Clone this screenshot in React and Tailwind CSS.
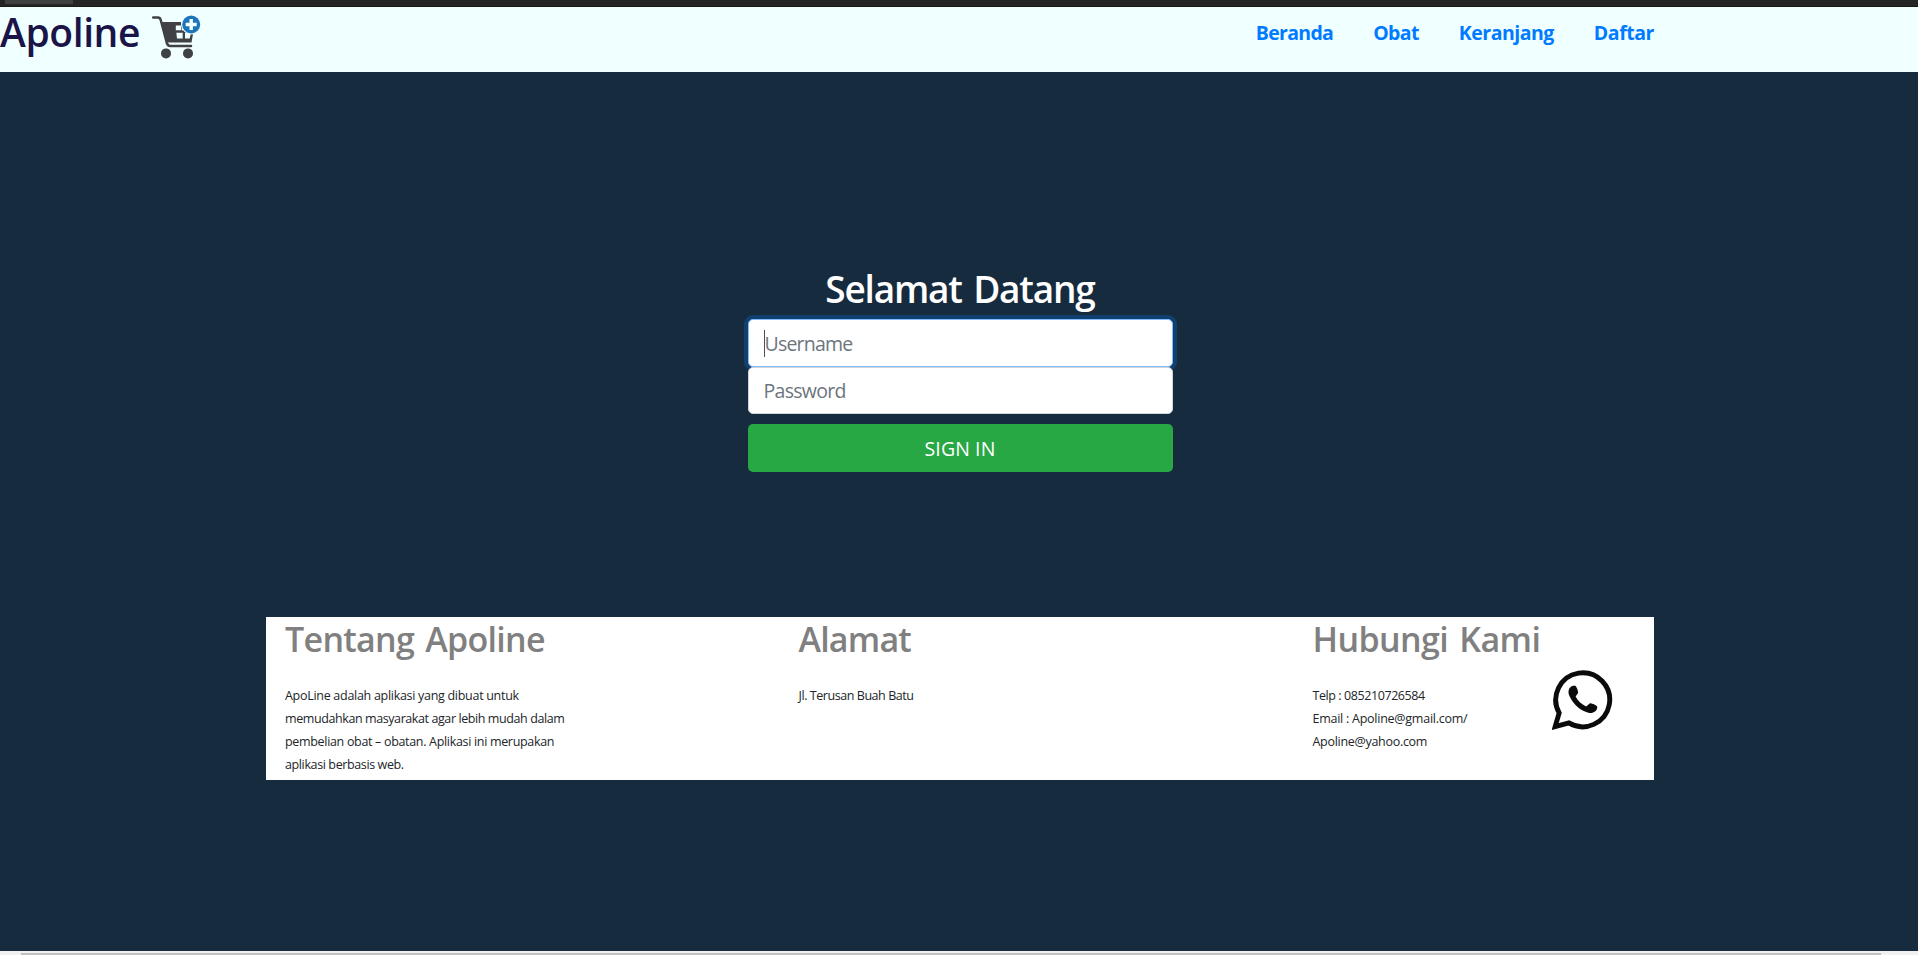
const family = "font-['Open_Sans','Noto_Sans',sans-serif]";

function CartIcon() {
  return (
    <svg viewBox="0 0 52 48" fill="none" className="h-12 w-[52px] shrink-0">
      <path d="M3.200 4.600H8Q10 4.600 10.700 7L16.200 27.500Q17 33 20.500 33H41" stroke="#404144" strokeWidth="2.500" strokeLinecap="round" strokeLinejoin="round" />
      <path d="M11.500 9H31V11.500Q31 13 32 14.500V17.500H35L43.200 20L41.500 29.500H17Z" fill="#404144" />
      <path d="M25.800 12.600H31L31.500 17.300H25.800ZM26.300 19.800H32.700V25.500H27ZM35 19.800H41L39.700 25.500H35Z" fill="#f0ffff" />
      <circle cx="16" cy="40.400" r="5" fill="#404144" />
      <circle cx="38" cy="40.400" r="5" fill="#404144" />
      <circle cx="41.200" cy="11.500" r="9.900" fill="#f0ffff" />
      <circle cx="41.200" cy="11.500" r="9" fill="#1c75bc" />
      <path d="M41.200 6V17M35.700 11.500H46.700" stroke="#f4ffff" strokeWidth="3.400" />
    </svg>
  );
}

function WhatsappIcon() {
  return (
    <svg viewBox="0 0 62 62" fill="none" className="size-[61px] shrink-0">
      <path d="M3.200 57.600L7.300 43.600A27.400 27.400 0 1 1 17.200 53.800Z" stroke="#0b0b0b" strokeWidth="5" strokeLinejoin="miter" />
      <path d="M21.500 16C17 17 15.500 22 18 27C22 35.500 29 41.500 37 43.500C42 44.500 46 41.500 46 37.500C46 36.300 39.500 33.400 38.300 34L34.700 37C30 35 26 31 24 27L26.500 23.500C27 22 24.800 16.500 23.800 16Z" fill="#0b0b0b" />
    </svg>
  );
}

export default function App() {
  return (
    <div className={`flex h-[955px] w-full flex-col overflow-hidden bg-[#172b3f] ${family}`}>
      <div className="h-[7px] shrink-0 border-b border-[#181818] bg-[#252525] pl-[5px]">
        <div className="h-1 w-[68px] bg-[#404040]" />
      </div>
      <header className="flex h-[65px] shrink-0 items-start bg-[#f0ffff]">
        <h1 className="mt-px w-[150px] text-[39px] leading-[48px] font-semibold tracking-[-0.400px] whitespace-nowrap text-[#1b1448]">Apoline</h1>
        <div className="mt-[6px]"><CartIcon /></div>
        <nav className="mt-[11px] mr-[264px] ml-auto flex gap-[40px] text-[19.500px] leading-[30px] font-bold whitespace-nowrap text-[#007bff]">
          <a className="tracking-[-0.700px]">Beranda</a>
          <a className="tracking-[-0.600px]">Obat</a>
          <a className="tracking-[-0.500px]">Keranjang</a>
          <a className="tracking-[-0.450px]">Daftar</a>
        </nav>
      </header>
      <main className="flex grow flex-col items-center pl-[2px]">
        <form className="mt-[193px] flex w-[425px] flex-col">
          <h2 className="h-[54px] text-center text-[37px] leading-[47px] font-semibold tracking-[-1.200px] whitespace-nowrap text-white [word-spacing:3px]">Selamat Datang</h2>
          <div className="flex h-12 items-center rounded-[5px] border border-[#80bdff] bg-white pl-[15px] text-[19.500px] tracking-[-0.800px] text-[#6c757d] shadow-[0_0_0_4px_rgba(0,123,255,0.25)]">
            <span className="h-[27px] w-px bg-[#495057]" />
            <span className="pt-px">Username</span>
          </div>
          <div className="z-10 flex h-[47px] items-center rounded-[5px] border border-[#ced4da] bg-white pl-[15px] text-[19.500px] tracking-[-0.700px] text-[#6c757d]">
            <span>Password</span>
          </div>
          <button type="button" className="mt-[10px] h-12 rounded-[5px] bg-[#28a745] pt-px text-[19.500px] tracking-[0.100px] text-white">SIGN IN</button>
        </form>
        <footer className="mt-[145px] grid h-[163px] w-[1388px] grid-cols-[513.500px_514px_1fr] bg-white pl-[19px] text-[12.500px] leading-[23px] text-[#212529]">
          <section>
            <h3 className="h-[67px] text-[34px] leading-[45px] font-semibold tracking-[-0.700px] whitespace-nowrap text-[#808080] [word-spacing:3px]">Tentang Apoline</h3>
            <p className="whitespace-nowrap">
              <span className="tracking-[-0.290px]">ApoLine adalah aplikasi yang dibuat untuk</span><br />
              <span className="tracking-[-0.410px]">memudahkan masyarakat agar lebih mudah dalam</span><br />
              <span className="tracking-[-0.320px]">pembelian obat – obatan. Aplikasi ini merupakan</span><br />
              <span className="tracking-[-0.380px]">aplikasi berbasis web.</span>
            </p>
          </section>
          <section>
            <h3 className="h-[67px] text-[34px] leading-[45px] font-semibold tracking-[-0.800px] whitespace-nowrap text-[#808080]">Alamat</h3>
            <p className="tracking-[-0.440px]">Jl. Terusan Buah Batu</p>
          </section>
          <section>
            <h3 className="h-[53px] text-[34px] leading-[45px] font-semibold tracking-[-0.600px] whitespace-nowrap text-[#808080] [word-spacing:3px]">Hubungi Kami</h3>
            <div className="flex">
              <p className="w-[239px] pt-[14px] whitespace-nowrap">
                <span className="tracking-[-0.420px]">Telp : 085210726584</span><br />
                <span className="tracking-[-0.250px]">Email : Apoline@gmail.com/</span><br />
                <span className="tracking-[-0.290px]">Apoline@yahoo.com</span>
              </p>
              <WhatsappIcon />
            </div>
          </section>
        </footer>
      </main>
      <div className="flex h-1 shrink-0 flex-col justify-end bg-[#f1f1f1] pr-[37px] pl-[21px]">
        <div className="h-0.5 bg-[#c1c1c1]" />
      </div>
    </div>
  );
}
